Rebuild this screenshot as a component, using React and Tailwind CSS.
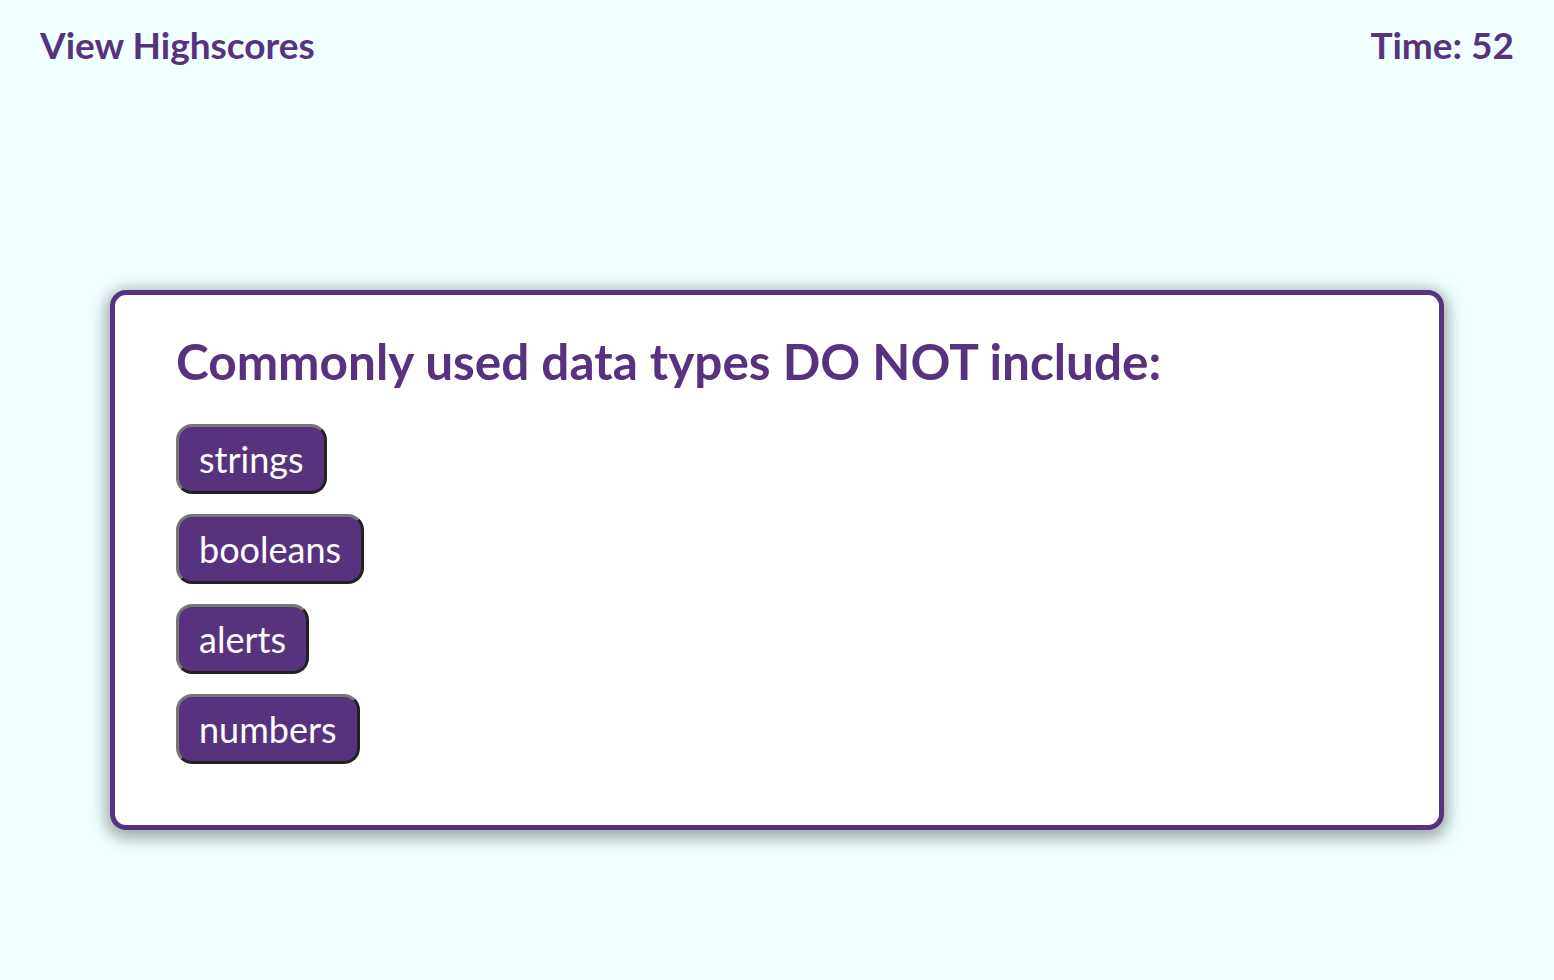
import React from 'react';

const choices = ['strings', 'booleans', 'alerts', 'numbers'];

const AnswerButton = ({ label }) => (
    <button
        type="button"
        className="block h-[70px] px-[20px] text-[36px] leading-none text-white bg-[#57337f] rounded-[16px] border-[3px] border-t-[#777777] border-l-[#777777] border-b-[#222222] border-r-[#222222]"
    >
        {label}
    </button>
);

export default function App() {
    return (
        <div
            className="min-h-screen bg-[#f0ffff] text-[#57337f]"
            style={{ fontFamily: '"Lato", "Open Sans", sans-serif' }}
        >
            <header className="flex justify-between items-center px-[40px] pt-[23px] text-[37px] font-bold leading-[44px]">
                <span>View Highscores</span>
                <span>Time: 52</span>
            </header>

            <main className="pt-[223px]">
                <div className="mx-[110px] bg-white border-[5px] border-[#57337f] rounded-[16px] shadow-[0_4px_16px_4px_rgba(0,0,0,0.35)] pl-[61px] pt-[36px] pb-[61px]">
                    <h2 className="text-[49.5px] font-bold leading-[60px] mb-[33px]">
                        Commonly used data types DO NOT include:
                    </h2>
                    <div className="flex flex-col items-start gap-[20px]">
                        {choices.map((c) => (
                            <AnswerButton key={c} label={c} />
                        ))}
                    </div>
                </div>
            </main>
        </div>
    );
}
